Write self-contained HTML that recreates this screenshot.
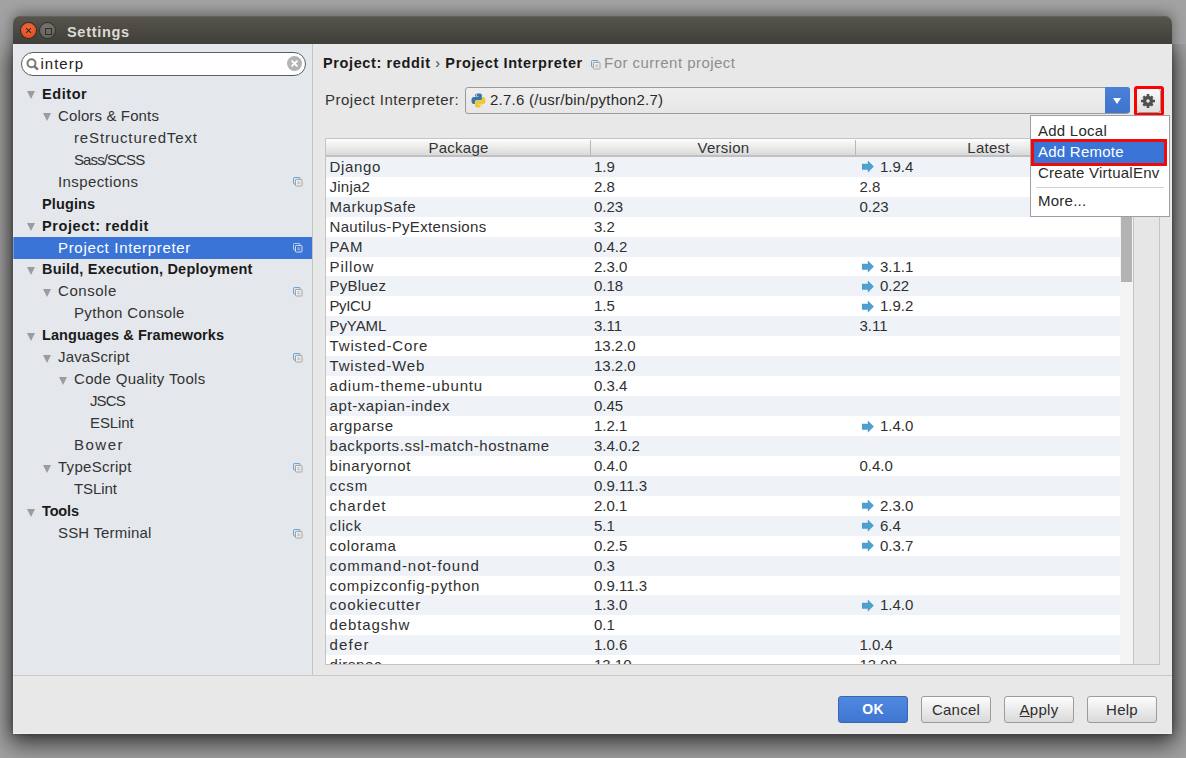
<!DOCTYPE html><html><head><meta charset="utf-8"><title>Settings</title><style>
*{margin:0;padding:0;box-sizing:border-box}
html,body{width:1186px;height:758px;overflow:hidden}
body{background:#a2a2a2;font-family:"Liberation Sans",sans-serif;position:relative}
.abs{position:absolute}
#win{position:absolute;left:13px;top:16px;width:1159px;height:718px;border-radius:7px 7px 0 0;background:#e8e8e8;
 box-shadow:0 -2px 14px rgba(0,0,0,0.4)}
#shd{position:absolute;left:13px;top:44px;width:1159px;height:690px;box-shadow:0 8px 22px 3px rgba(0,0,0,0.6), 0 0 3px rgba(0,0,0,0.25);clip-path:polygon(-60px -40px,20px -40px,20px 0,calc(100% + 60px) 0,calc(100% + 60px) calc(100% + 60px),-60px calc(100% + 60px))}
#title{position:absolute;left:0;top:0;width:1159px;height:28px;border-radius:7px 7px 0 0;
 background:linear-gradient(#57554d,#403e39);box-shadow:inset 0 1px 0 #64615a}
#title .t{position:absolute;left:54px;top:6.5px;font-weight:bold;font-size:14.5px;color:#dfdbd2;letter-spacing:0.7px;line-height:18px}
.wb{position:absolute;top:7px;width:15px;height:15px;border-radius:50%}
#side{position:absolute;left:0;top:28px;width:300px;height:631px;background:#e4e8ec;border-right:1px solid #c2c4c6}
#sep{position:absolute;left:0;top:659px;width:1159px;height:1px;background:#c8c8c8}
.txt{font-size:15px;color:#333;white-space:pre;line-height:22px;letter-spacing:0.25px}
.b{font-weight:bold;font-size:14.5px;color:#1a1a1a;letter-spacing:0.2px}
.row{position:absolute;left:0;width:299px;height:22px}
.tri{position:absolute;width:0;height:0;border-left:4.5px solid transparent;border-right:4.5px solid transparent;border-top:8px solid #9c9c9c;top:8px}
.ic{position:absolute;left:280px;top:6px}
#search{position:absolute;left:8px;top:8px;width:285px;height:24px;border-radius:12px;background:#fff;border:1px solid #5e5e5e}
table{border-collapse:collapse}
.tb{position:absolute;left:312px;top:122px;width:809px;height:527px;background:#fff;border:1px solid #c4c4c4;overflow:hidden}
.hdr{position:absolute;left:0;top:0;width:807px;height:18px;background:linear-gradient(#fdfdfd,#dadada);border-bottom:2px solid #c0c0c0}
.hc{position:absolute;top:0;height:16px;text-align:center;font-size:15px;line-height:17px;color:#333;letter-spacing:0.25px}
.vd{position:absolute;top:1px;width:1px;height:15px;background:#b8b8b8}
.tr{position:absolute;left:0;width:794px;height:20px}
.tr.s{background:#eff3f8}
.c{position:absolute;top:0;font-size:15px;line-height:20px;color:#303030;white-space:pre;letter-spacing:0.25px}
.arr{position:absolute;top:4.5px}
.btn{position:absolute;top:680px;height:27px;border-radius:3px;border:1px solid #9c9c9c;background:linear-gradient(#fdfdfd,#d9d9d9);font-size:15px;line-height:25px;text-align:center;color:#2e2e2e;letter-spacing:0.25px}
</style></head><body>
<div id="shd"></div><div id="win">
<div id="title">
<div class="wb" style="left:8px;background:radial-gradient(circle at 50% 35%,#f26b3a,#d9471a);box-shadow:0 0 0 1px #3a2a22"><svg width="15" height="15" viewBox="0 0 15 15" style="position:absolute;left:0;top:0"><path d="M5.1 5.1l4.8 4.8M9.9 5.1l-4.8 4.8" stroke="#3a2418" stroke-width="1.1"/></svg></div>
<div class="wb" style="left:27px;background:radial-gradient(circle at 50% 35%,#7a7872,#5c5b56);box-shadow:0 0 0 1px #33322e"><div style="position:absolute;left:4.5px;top:4.5px;width:7px;height:7px;border:1.3px solid #2e2d2a;background:#6a6964"></div></div>
<div class="t">Settings</div>
</div>
<div id="side">
<div id="search"><svg width="16" height="16" viewBox="0 0 16 16" style="position:absolute;left:3px;top:4px"><circle cx="6.5" cy="6.3" r="4" fill="none" stroke="#7a7a7a" stroke-width="2"/><path d="M9.5 9.3l3.4 3.4" stroke="#7a7a7a" stroke-width="2.6"/></svg>
<div class="abs txt" style="left:18.5px;top:0;line-height:22px;color:#222;letter-spacing:1px">interp</div>
<div class="abs" style="left:265px;top:3px;width:15px;height:15px;border-radius:50%;background:#b4b4b4"><svg width="15" height="15" viewBox="0 0 15 15" style="position:absolute;left:0;top:0"><path d="M4.6 4.6l5.8 5.8M10.4 4.6l-5.8 5.8" stroke="#fff" stroke-width="1.8"/></svg></div>
</div>
<div class="row" style="top:39px;">
<div class="tri" style="left:14px"></div>
<div class="abs txt b" style="left:29px;top:0.0px;letter-spacing:0.56px">Editor</div>
</div>
<div class="row" style="top:61px;">
<div class="tri" style="left:30px"></div>
<div class="abs txt" style="left:45px;top:-0.07px;letter-spacing:0.13px">Colors &amp; Fonts</div>
</div>
<div class="row" style="top:83px;">
<div class="abs txt" style="left:61px;top:-0.14px;letter-spacing:0.86px">reStructuredText</div>
</div>
<div class="row" style="top:105px;">
<div class="abs txt" style="left:61px;top:-0.21px;letter-spacing:-0.9px">Sass/SCSS</div>
</div>
<div class="row" style="top:127px;">
<div class="abs txt" style="left:45px;top:-0.28px;letter-spacing:0.4px">Inspections</div>
<svg class="ic" width="10" height="10" viewBox="0 0 10 10"><rect x="0.5" y="0.5" width="6.5" height="6.5" rx="0.8" fill="#d6e5f1" stroke="#6aa4d2"/><rect x="2.5" y="2.5" width="6.5" height="6.5" rx="0.6" fill="#f0f0f0" stroke="#a4a4a4"/><path d="M4.2 4.9h3.1M4.2 6.7h3.1" stroke="#a8a8a8" stroke-width="0.8"/></svg>
</div>
<div class="row" style="top:149px;">
<div class="abs txt b" style="left:29px;top:-0.35px;letter-spacing:0.13px">Plugins</div>
</div>
<div class="row" style="top:171px;">
<div class="tri" style="left:14px"></div>
<div class="abs txt b" style="left:29px;top:-0.42px;letter-spacing:0.58px">Project: reddit</div>
</div>
<div class="row" style="top:193px;background:#3a74d7;">
<div class="abs txt" style="left:45px;top:-0.49px;color:#fff;letter-spacing:0.68px">Project Interpreter</div>
<svg class="ic" width="10" height="10" viewBox="0 0 10 10"><rect x="0.5" y="0.5" width="6.5" height="6.5" rx="0.8" fill="none" stroke="#a8d0f0"/><rect x="2.5" y="2.5" width="6.5" height="6.5" rx="0.8" fill="#3a74d7" stroke="#d8dde6"/><path d="M4.3 5h3M4.3 6.7h3" stroke="#b8c8e0" stroke-width="0.9"/></svg>
</div>
<div class="row" style="top:215px;">
<div class="tri" style="left:14px"></div>
<div class="abs txt b" style="left:29px;top:-0.56px;letter-spacing:0.21px">Build, Execution, Deployment</div>
</div>
<div class="row" style="top:237px;">
<div class="tri" style="left:30px"></div>
<div class="abs txt" style="left:45px;top:-0.63px;letter-spacing:0.55px">Console</div>
<svg class="ic" width="10" height="10" viewBox="0 0 10 10"><rect x="0.5" y="0.5" width="6.5" height="6.5" rx="0.8" fill="#d6e5f1" stroke="#6aa4d2"/><rect x="2.5" y="2.5" width="6.5" height="6.5" rx="0.6" fill="#f0f0f0" stroke="#a4a4a4"/><path d="M4.2 4.9h3.1M4.2 6.7h3.1" stroke="#a8a8a8" stroke-width="0.8"/></svg>
</div>
<div class="row" style="top:259px;">
<div class="abs txt" style="left:61px;top:-0.7px;letter-spacing:0.35px">Python Console</div>
</div>
<div class="row" style="top:281px;">
<div class="tri" style="left:14px"></div>
<div class="abs txt b" style="left:29px;top:-0.77px;letter-spacing:0.07px">Languages &amp; Frameworks</div>
</div>
<div class="row" style="top:303px;">
<div class="tri" style="left:30px"></div>
<div class="abs txt" style="left:45px;top:-0.84px;letter-spacing:0.15px">JavaScript</div>
<svg class="ic" width="10" height="10" viewBox="0 0 10 10"><rect x="0.5" y="0.5" width="6.5" height="6.5" rx="0.8" fill="#d6e5f1" stroke="#6aa4d2"/><rect x="2.5" y="2.5" width="6.5" height="6.5" rx="0.6" fill="#f0f0f0" stroke="#a4a4a4"/><path d="M4.2 4.9h3.1M4.2 6.7h3.1" stroke="#a8a8a8" stroke-width="0.8"/></svg>
</div>
<div class="row" style="top:325px;">
<div class="tri" style="left:46px"></div>
<div class="abs txt" style="left:61px;top:-0.91px;letter-spacing:0.33px">Code Quality Tools</div>
</div>
<div class="row" style="top:347px;">
<div class="abs txt" style="left:77px;top:-0.98px;letter-spacing:-0.88px">JSCS</div>
</div>
<div class="row" style="top:369px;">
<div class="abs txt" style="left:77px;top:-1.05px;letter-spacing:-0.11px">ESLint</div>
</div>
<div class="row" style="top:391px;">
<div class="abs txt" style="left:61px;top:-1.12px;letter-spacing:1.5px">Bower</div>
</div>
<div class="row" style="top:413px;">
<div class="tri" style="left:30px"></div>
<div class="abs txt" style="left:45px;top:-1.19px;letter-spacing:0.28px">TypeScript</div>
<svg class="ic" width="10" height="10" viewBox="0 0 10 10"><rect x="0.5" y="0.5" width="6.5" height="6.5" rx="0.8" fill="#d6e5f1" stroke="#6aa4d2"/><rect x="2.5" y="2.5" width="6.5" height="6.5" rx="0.6" fill="#f0f0f0" stroke="#a4a4a4"/><path d="M4.2 4.9h3.1M4.2 6.7h3.1" stroke="#a8a8a8" stroke-width="0.8"/></svg>
</div>
<div class="row" style="top:435px;">
<div class="abs txt" style="left:61px;top:-1.26px;letter-spacing:-0.09px">TSLint</div>
</div>
<div class="row" style="top:457px;">
<div class="tri" style="left:14px"></div>
<div class="abs txt b" style="left:29px;top:-1.33px;letter-spacing:-0.15px">Tools</div>
</div>
<div class="row" style="top:479px;">
<div class="abs txt" style="left:45px;top:-1.4px;letter-spacing:0.17px">SSH Terminal</div>
<svg class="ic" width="10" height="10" viewBox="0 0 10 10"><rect x="0.5" y="0.5" width="6.5" height="6.5" rx="0.8" fill="#d6e5f1" stroke="#6aa4d2"/><rect x="2.5" y="2.5" width="6.5" height="6.5" rx="0.6" fill="#f0f0f0" stroke="#a4a4a4"/><path d="M4.2 4.9h3.1M4.2 6.7h3.1" stroke="#a8a8a8" stroke-width="0.8"/></svg>
</div>
</div>
<div class="abs txt b" style="left:310px;top:36px;line-height:22px;letter-spacing:0.62px">Project: reddit <span style="font-weight:normal;color:#444">›</span> Project Interpreter</div>
<div class="abs" style="left:578px;top:44px"><svg style="position:absolute;left:0;top:0" width="10" height="10" viewBox="0 0 10 10"><rect x="0.5" y="0.5" width="6.5" height="6.5" rx="0.8" fill="#d6e5f1" stroke="#6aa4d2"/><rect x="2.5" y="2.5" width="6.5" height="6.5" rx="0.6" fill="#f0f0f0" stroke="#a4a4a4"/><path d="M4.2 4.9h3.1M4.2 6.7h3.1" stroke="#a8a8a8" stroke-width="0.8"/></svg></div>
<div class="abs txt" style="left:591px;top:36px;color:#8e8e8e;letter-spacing:0.47px">For current project</div>
<div class="abs txt" style="left:312px;top:73px;letter-spacing:0.5px">Project Interpreter:</div>
<div class="abs" style="left:452px;top:71px;width:665px;height:26.6px;border:1px solid #9a9a9a;border-radius:3px;background:linear-gradient(#efefef,#e6e6e6)">
<svg width="15" height="15" viewBox="0 0 16 16" style="position:absolute;left:5px;top:5px"><path d="M7.9 0.5C4.2 0.5 4.4 2.1 4.4 2.1v1.7h3.6v0.5H3C1.2 4.3 0.5 5.9 0.5 8s0.8 3.7 2.3 3.7h1.4V9.8c0 0 0-2 2-2h3.5c0 0 1.9 0 1.9-1.8V2.3C11.6 0.6 9.9 0.5 7.9 0.5z" fill="#3a75a8"/><path d="M8.1 15.5c3.7 0 3.5-1.6 3.5-1.6v-1.7H8v-0.5h5c1.8 0 2.5-1.6 2.5-3.7s-0.8-3.7-2.3-3.7h-1.4v1.9c0 0 0 2-2 2H6.3c0 0-1.9 0-1.9 1.8v3.7C4.4 15.4 6.1 15.5 8.1 15.5z" fill="#f0c830"/><circle cx="5.9" cy="2.1" r="0.7" fill="#fff"/><circle cx="10.1" cy="13.9" r="0.7" fill="#fff"/></svg>
<div class="abs txt" style="left:24px;top:1px;color:#2a2a2a">2.7.6 (/usr/bin/python2.7)</div>
<div class="abs" style="left:639px;top:-1px;width:25px;height:26px;border-radius:0 3px 3px 0;background:linear-gradient(#4b80d8,#3f73cc)"><div style="position:absolute;left:8px;top:11px;width:0;height:0;border-left:4px solid transparent;border-right:4px solid transparent;border-top:6px solid #fff"></div></div>
</div>
<div class="abs" style="left:1121px;top:70px;width:30px;height:30px;border:3px solid #f00;border-radius:3px"></div>
<div class="abs" style="left:1124px;top:73px;width:24px;height:24px;border-radius:3px;background:linear-gradient(#fbfbfb,#dedede);border-right:1px solid #9a9a9a;border-bottom:1px solid #9a9a9a">
<svg width="16" height="16" viewBox="0 0 16 16" style="position:absolute;left:3px;top:3.5px"><g fill="#505050"><circle cx="8" cy="8" r="5.2"/><rect x="6.7" y="1" width="2.6" height="14"/><rect x="1" y="6.7" width="14" height="2.6"/><rect x="6.7" y="1.4" width="2.6" height="13.2" transform="rotate(45 8 8)"/><rect x="6.7" y="1.4" width="2.6" height="13.2" transform="rotate(-45 8 8)"/></g><circle cx="8" cy="8" r="1.7" fill="#ececec"/></svg>
</div>
<div class="tb">
<div class="hdr"><div class="hc" style="left:0;width:265px">Package</div><div class="vd" style="left:264px"></div><div class="hc" style="left:265px;width:265px">Version</div><div class="vd" style="left:529px"></div><div class="hc" style="left:530px;width:265px">Latest</div></div>
<div class="tr s" style="top:17.8px">
<div class="c" style="left:3.5px;letter-spacing:0.65px">Django</div><div class="c" style="left:268px;letter-spacing:0px">1.9</div>
<div class="abs" style="left:536px;top:0;width:12px;height:20px"><svg class="arr" width="12" height="12" viewBox="0 0 12 12"><path d="M0 3H6V0L11.6 5.6 6 11.2V8.6H0z" fill="#4ea1cf" stroke="#3f92c4" stroke-width="0.4"/></svg></div><div class="c" style="left:554px;letter-spacing:0">1.9.4</div>
</div>
<div class="tr" style="top:37.74px">
<div class="c" style="left:3.5px;letter-spacing:0.25px">Jinja2</div><div class="c" style="left:268px;letter-spacing:0px">2.8</div>
<div class="c" style="left:533.5px;letter-spacing:0">2.8</div>
</div>
<div class="tr s" style="top:57.68px">
<div class="c" style="left:3.5px;letter-spacing:0.57px">MarkupSafe</div><div class="c" style="left:268px;letter-spacing:0px">0.23</div>
<div class="c" style="left:533.5px;letter-spacing:0">0.23</div>
</div>
<div class="tr" style="top:77.62px">
<div class="c" style="left:3.5px;letter-spacing:0.33px">Nautilus-PyExtensions</div><div class="c" style="left:268px;letter-spacing:0px">3.2</div>
</div>
<div class="tr s" style="top:97.56px">
<div class="c" style="left:3.5px;letter-spacing:0.85px">PAM</div><div class="c" style="left:268px;letter-spacing:0px">0.4.2</div>
</div>
<div class="tr" style="top:117.5px">
<div class="c" style="left:3.5px;letter-spacing:0.93px">Pillow</div><div class="c" style="left:268px;letter-spacing:0px">2.3.0</div>
<div class="abs" style="left:536px;top:0;width:12px;height:20px"><svg class="arr" width="12" height="12" viewBox="0 0 12 12"><path d="M0 3H6V0L11.6 5.6 6 11.2V8.6H0z" fill="#4ea1cf" stroke="#3f92c4" stroke-width="0.4"/></svg></div><div class="c" style="left:554px;letter-spacing:0">3.1.1</div>
</div>
<div class="tr s" style="top:137.44px">
<div class="c" style="left:3.5px;letter-spacing:0.23px">PyBluez</div><div class="c" style="left:268px;letter-spacing:0px">0.18</div>
<div class="abs" style="left:536px;top:0;width:12px;height:20px"><svg class="arr" width="12" height="12" viewBox="0 0 12 12"><path d="M0 3H6V0L11.6 5.6 6 11.2V8.6H0z" fill="#4ea1cf" stroke="#3f92c4" stroke-width="0.4"/></svg></div><div class="c" style="left:554px;letter-spacing:0">0.22</div>
</div>
<div class="tr" style="top:157.38px">
<div class="c" style="left:3.5px;letter-spacing:-0.38px">PyICU</div><div class="c" style="left:268px;letter-spacing:0px">1.5</div>
<div class="abs" style="left:536px;top:0;width:12px;height:20px"><svg class="arr" width="12" height="12" viewBox="0 0 12 12"><path d="M0 3H6V0L11.6 5.6 6 11.2V8.6H0z" fill="#4ea1cf" stroke="#3f92c4" stroke-width="0.4"/></svg></div><div class="c" style="left:554px;letter-spacing:0">1.9.2</div>
</div>
<div class="tr s" style="top:177.32px">
<div class="c" style="left:3.5px;letter-spacing:-0.07px">PyYAML</div><div class="c" style="left:268px;letter-spacing:0px">3.11</div>
<div class="c" style="left:533.5px;letter-spacing:0">3.11</div>
</div>
<div class="tr" style="top:197.26px">
<div class="c" style="left:3.5px;letter-spacing:0.87px">Twisted-Core</div><div class="c" style="left:268px;letter-spacing:0px">13.2.0</div>
</div>
<div class="tr s" style="top:217.2px">
<div class="c" style="left:3.5px;letter-spacing:0.84px">Twisted-Web</div><div class="c" style="left:268px;letter-spacing:0px">13.2.0</div>
</div>
<div class="tr" style="top:237.14px">
<div class="c" style="left:3.5px;letter-spacing:0.84px">adium-theme-ubuntu</div><div class="c" style="left:268px;letter-spacing:0px">0.3.4</div>
</div>
<div class="tr s" style="top:257.08px">
<div class="c" style="left:3.5px;letter-spacing:0.6px">apt-xapian-index</div><div class="c" style="left:268px;letter-spacing:0px">0.45</div>
</div>
<div class="tr" style="top:277.02px">
<div class="c" style="left:3.5px;letter-spacing:0.62px">argparse</div><div class="c" style="left:268px;letter-spacing:0px">1.2.1</div>
<div class="abs" style="left:536px;top:0;width:12px;height:20px"><svg class="arr" width="12" height="12" viewBox="0 0 12 12"><path d="M0 3H6V0L11.6 5.6 6 11.2V8.6H0z" fill="#4ea1cf" stroke="#3f92c4" stroke-width="0.4"/></svg></div><div class="c" style="left:554px;letter-spacing:0">1.4.0</div>
</div>
<div class="tr s" style="top:296.96px">
<div class="c" style="left:3.5px;letter-spacing:0.57px">backports.ssl-match-hostname</div><div class="c" style="left:268px;letter-spacing:0px">3.4.0.2</div>
</div>
<div class="tr" style="top:316.9px">
<div class="c" style="left:3.5px;letter-spacing:0.58px">binaryornot</div><div class="c" style="left:268px;letter-spacing:0px">0.4.0</div>
<div class="c" style="left:533.5px;letter-spacing:0">0.4.0</div>
</div>
<div class="tr s" style="top:336.84px">
<div class="c" style="left:3.5px;letter-spacing:0.92px">ccsm</div><div class="c" style="left:268px;letter-spacing:0px">0.9.11.3</div>
</div>
<div class="tr" style="top:356.78px">
<div class="c" style="left:3.5px;letter-spacing:1.0px">chardet</div><div class="c" style="left:268px;letter-spacing:0px">2.0.1</div>
<div class="abs" style="left:536px;top:0;width:12px;height:20px"><svg class="arr" width="12" height="12" viewBox="0 0 12 12"><path d="M0 3H6V0L11.6 5.6 6 11.2V8.6H0z" fill="#4ea1cf" stroke="#3f92c4" stroke-width="0.4"/></svg></div><div class="c" style="left:554px;letter-spacing:0">2.3.0</div>
</div>
<div class="tr s" style="top:376.72px">
<div class="c" style="left:3.5px;letter-spacing:0.65px">click</div><div class="c" style="left:268px;letter-spacing:0px">5.1</div>
<div class="abs" style="left:536px;top:0;width:12px;height:20px"><svg class="arr" width="12" height="12" viewBox="0 0 12 12"><path d="M0 3H6V0L11.6 5.6 6 11.2V8.6H0z" fill="#4ea1cf" stroke="#3f92c4" stroke-width="0.4"/></svg></div><div class="c" style="left:554px;letter-spacing:0">6.4</div>
</div>
<div class="tr" style="top:396.66px">
<div class="c" style="left:3.5px;letter-spacing:0.68px">colorama</div><div class="c" style="left:268px;letter-spacing:0px">0.2.5</div>
<div class="abs" style="left:536px;top:0;width:12px;height:20px"><svg class="arr" width="12" height="12" viewBox="0 0 12 12"><path d="M0 3H6V0L11.6 5.6 6 11.2V8.6H0z" fill="#4ea1cf" stroke="#3f92c4" stroke-width="0.4"/></svg></div><div class="c" style="left:554px;letter-spacing:0">0.3.7</div>
</div>
<div class="tr s" style="top:416.6px">
<div class="c" style="left:3.5px;letter-spacing:0.94px">command-not-found</div><div class="c" style="left:268px;letter-spacing:0px">0.3</div>
</div>
<div class="tr" style="top:436.54px">
<div class="c" style="left:3.5px;letter-spacing:0.68px">compizconfig-python</div><div class="c" style="left:268px;letter-spacing:0px">0.9.11.3</div>
</div>
<div class="tr s" style="top:456.48px">
<div class="c" style="left:3.5px;letter-spacing:0.9px">cookiecutter</div><div class="c" style="left:268px;letter-spacing:0px">1.3.0</div>
<div class="abs" style="left:536px;top:0;width:12px;height:20px"><svg class="arr" width="12" height="12" viewBox="0 0 12 12"><path d="M0 3H6V0L11.6 5.6 6 11.2V8.6H0z" fill="#4ea1cf" stroke="#3f92c4" stroke-width="0.4"/></svg></div><div class="c" style="left:554px;letter-spacing:0">1.4.0</div>
</div>
<div class="tr" style="top:476.42px">
<div class="c" style="left:3.5px;letter-spacing:0.9px">debtagshw</div><div class="c" style="left:268px;letter-spacing:0px">0.1</div>
</div>
<div class="tr s" style="top:496.36px">
<div class="c" style="left:3.5px;letter-spacing:1.2px">defer</div><div class="c" style="left:268px;letter-spacing:0px">1.0.6</div>
<div class="c" style="left:533.5px;letter-spacing:0">1.0.4</div>
</div>
<div class="tr" style="top:516.3px">
<div class="c" style="left:3.5px;letter-spacing:0.6px">dirspec</div><div class="c" style="left:268px;letter-spacing:0px">13.10</div>
<div class="c" style="left:533.5px;letter-spacing:0">13.08</div>
</div>
<div class="abs" style="left:794px;top:18px;width:13px;height:510px;background:#f4f4f4"></div>
<div class="abs" style="left:795px;top:18px;width:11px;height:125px;background:#b3b3b3"></div>
</div>
<div class="abs" style="left:1121px;top:122px;width:26px;height:527px;border:1px solid #c4c4c4;border-left:none;background:#e6e6e6"></div>
<div class="abs" style="left:1017px;top:99px;width:140px;height:102px;background:#fff;border:1px solid #9e9e9e">
<div class="abs txt" style="left:7px;top:4px;color:#2a2a2a">Add Local</div>
<div class="abs" style="left:3px;top:26px;width:130px;height:21px;background:#3a74d6"></div>
<div class="abs txt" style="left:7px;top:25px;color:#fff">Add Remote</div>
<div class="abs" style="left:0;top:23px;width:136px;height:27px;border:3px solid #f20a0a"></div>
<div class="abs txt" style="left:7px;top:46px;color:#2a2a2a">Create VirtualEnv</div>
<div class="abs" style="left:5px;top:71px;width:128px;height:1px;background:#d2d2d2"></div>
<div class="abs txt" style="left:7px;top:74px;color:#2a2a2a">More...</div>
</div>
<div id="sep"></div>
<div class="btn" style="left:825px;width:70px;background:linear-gradient(#5089e0,#3e76d2);border-color:#3a66b0;color:#fff;font-weight:bold;font-size:14px">OK</div>
<div class="btn" style="left:908px;width:70px">Cancel</div>
<div class="btn" style="left:991px;width:70px"><u>A</u>pply</div>
<div class="btn" style="left:1074px;width:70px">Help</div>
<div class="abs" style="left:0;top:28px;width:1159px;height:690px;border-left:1px solid rgba(255,255,255,0.3);border-right:1px solid rgba(255,255,255,0.15);border-bottom:1px solid rgba(255,255,255,0.35);pointer-events:none"></div>
</div>
</body></html>
